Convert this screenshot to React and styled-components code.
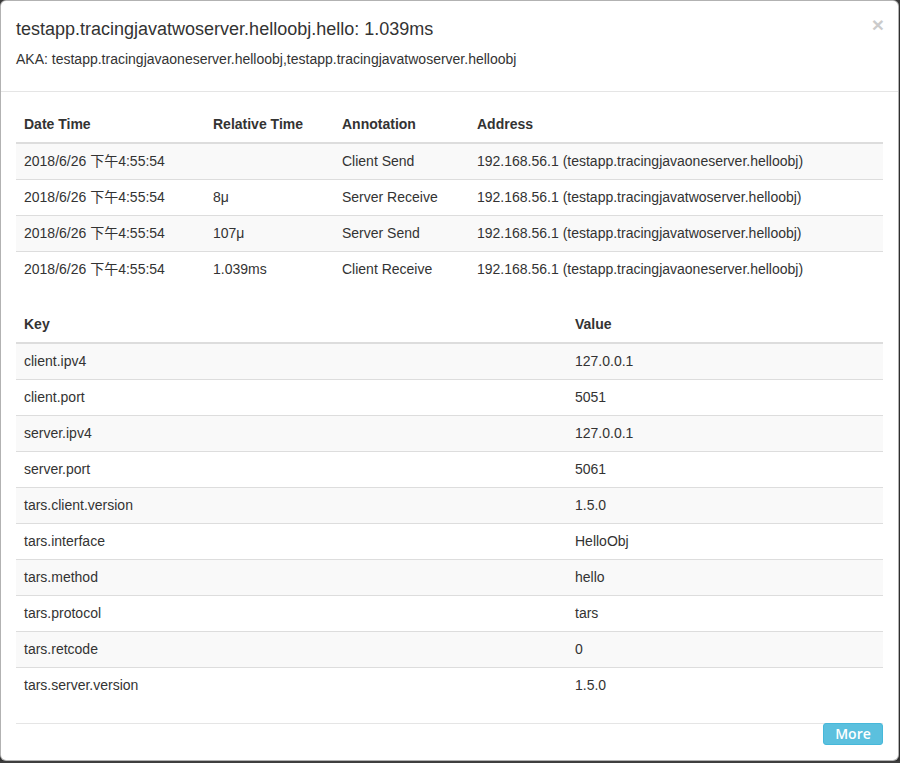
import styled, { createGlobalStyle } from 'styled-components'

const GlobalStyle = createGlobalStyle`
  html, body {
    margin: 0;
    padding: 0;
    background: #3e3e3e;
  }
  body {
    font-family: "Liberation Sans", Arial, "Noto Sans CJK SC", sans-serif;
    font-size: 14px;
    line-height: 20px;
    color: #333;
  }
  * { box-sizing: border-box; }
`

const annotations = [
  { date: '2018/6/26 下午4:55:54', rel: '', name: 'Client Send', addr: '192.168.56.1 (testapp.tracingjavaoneserver.helloobj)' },
  { date: '2018/6/26 下午4:55:54', rel: '8μ', name: 'Server Receive', addr: '192.168.56.1 (testapp.tracingjavatwoserver.helloobj)' },
  { date: '2018/6/26 下午4:55:54', rel: '107μ', name: 'Server Send', addr: '192.168.56.1 (testapp.tracingjavatwoserver.helloobj)' },
  { date: '2018/6/26 下午4:55:54', rel: '1.039ms', name: 'Client Receive', addr: '192.168.56.1 (testapp.tracingjavaoneserver.helloobj)' },
]

const tags = [
  ['client.ipv4', '127.0.0.1'],
  ['client.port', '5051'],
  ['server.ipv4', '127.0.0.1'],
  ['server.port', '5061'],
  ['tars.client.version', '1.5.0'],
  ['tars.interface', 'HelloObj'],
  ['tars.method', 'hello'],
  ['tars.protocol', 'tars'],
  ['tars.retcode', '0'],
  ['tars.server.version', '1.5.0'],
]

export default function App() {
  return (
    <>
      <GlobalStyle />
      <Modal>
        <Header>
          <TitleRow>
            <Title>testapp.tracingjavatwoserver.helloobj.hello: 1.039ms</Title>
            <Close>×</Close>
          </TitleRow>
          <Aka>AKA: testapp.tracingjavaoneserver.helloobj,testapp.tracingjavatwoserver.helloobj</Aka>
        </Header>
        <Body>
          <Table>
            <colgroup>
              <col style={{ width: 189 }} />
              <col style={{ width: 129 }} />
              <col style={{ width: 135 }} />
              <col />
            </colgroup>
            <thead>
              <tr>
                <Th>Date Time</Th>
                <Th>Relative Time</Th>
                <Th>Annotation</Th>
                <Th>Address</Th>
              </tr>
            </thead>
            <tbody>
              {annotations.map((a, i) => (
                <Row key={i} $striped={i % 2 === 0}>
                  <Td>{a.date}</Td>
                  <Td>{a.rel}</Td>
                  <Td>{a.name}</Td>
                  <Td>{a.addr}</Td>
                </Row>
              ))}
            </tbody>
          </Table>
          <Table>
            <colgroup>
              <col style={{ width: 551 }} />
              <col />
            </colgroup>
            <thead>
              <tr>
                <Th>Key</Th>
                <Th>Value</Th>
              </tr>
            </thead>
            <tbody>
              {tags.map(([k, v], i) => (
                <Row key={k} $striped={i % 2 === 0}>
                  <Td>{k}</Td>
                  <Td>{v}</Td>
                </Row>
              ))}
            </tbody>
          </Table>
          <Footer>
            <MoreButton>More</MoreButton>
          </Footer>
        </Body>
      </Modal>
    </>
  )
}

const Modal = styled.div`
  width: 899px;
  background: #fff;
  border: 1px solid rgba(0, 0, 0, 0.3);
  border-radius: 6px;
  box-shadow: 0 5px 15px rgba(0, 0, 0, 0.5);
`

const Header = styled.div`
  padding: 15px;
  border-bottom: 1px solid #e5e5e5;
`

const TitleRow = styled.div`
  display: flex;
  justify-content: space-between;
  align-items: flex-start;
`

const Title = styled.h4`
  margin: 0;
  font-size: 18px;
  font-weight: 500;
  line-height: 26px;
`

const Close = styled.span`
  font-size: 21px;
  font-weight: bold;
  line-height: 1;
  color: #000;
  opacity: 0.2;
  margin-top: -2px;
  margin-right: -1px;
`

const Aka = styled.h5`
  margin: 10px 0 9px;
  font-size: 14px;
  font-weight: 500;
  line-height: 15px;
`

const Body = styled.div`
  padding: 15px;
`

const Table = styled.table`
  width: 100%;
  border-collapse: collapse;
  border-spacing: 0;
  margin-bottom: 20px;
  table-layout: fixed;
`

const Th = styled.th`
  text-align: left;
  font-weight: bold;
  padding: 8px;
  line-height: 19px;
  border-bottom: 2px solid #ddd;
`

const Row = styled.tr`
  background: ${p => (p.$striped ? '#f9f9f9' : 'transparent')};
`

const Td = styled.td`
  padding: 8px;
  line-height: 19px;
  border-top: 1px solid #ddd;
  white-space: nowrap;
`

const Footer = styled.div`
  display: flex;
  justify-content: flex-end;
  border-top: 1px solid #e5e5e5;
`

const MoreButton = styled.button`
  width: 60px;
  height: 22px;
  margin-top: -1px;
  padding: 0;
  background: #5bc0de;
  border: 1px solid #46b8da;
  border-radius: 3px;
  color: #fff;
  font-family: "Open Sans", "Liberation Sans", sans-serif;
  font-size: 14px;
  font-weight: 600;
  line-height: 20px;
`
